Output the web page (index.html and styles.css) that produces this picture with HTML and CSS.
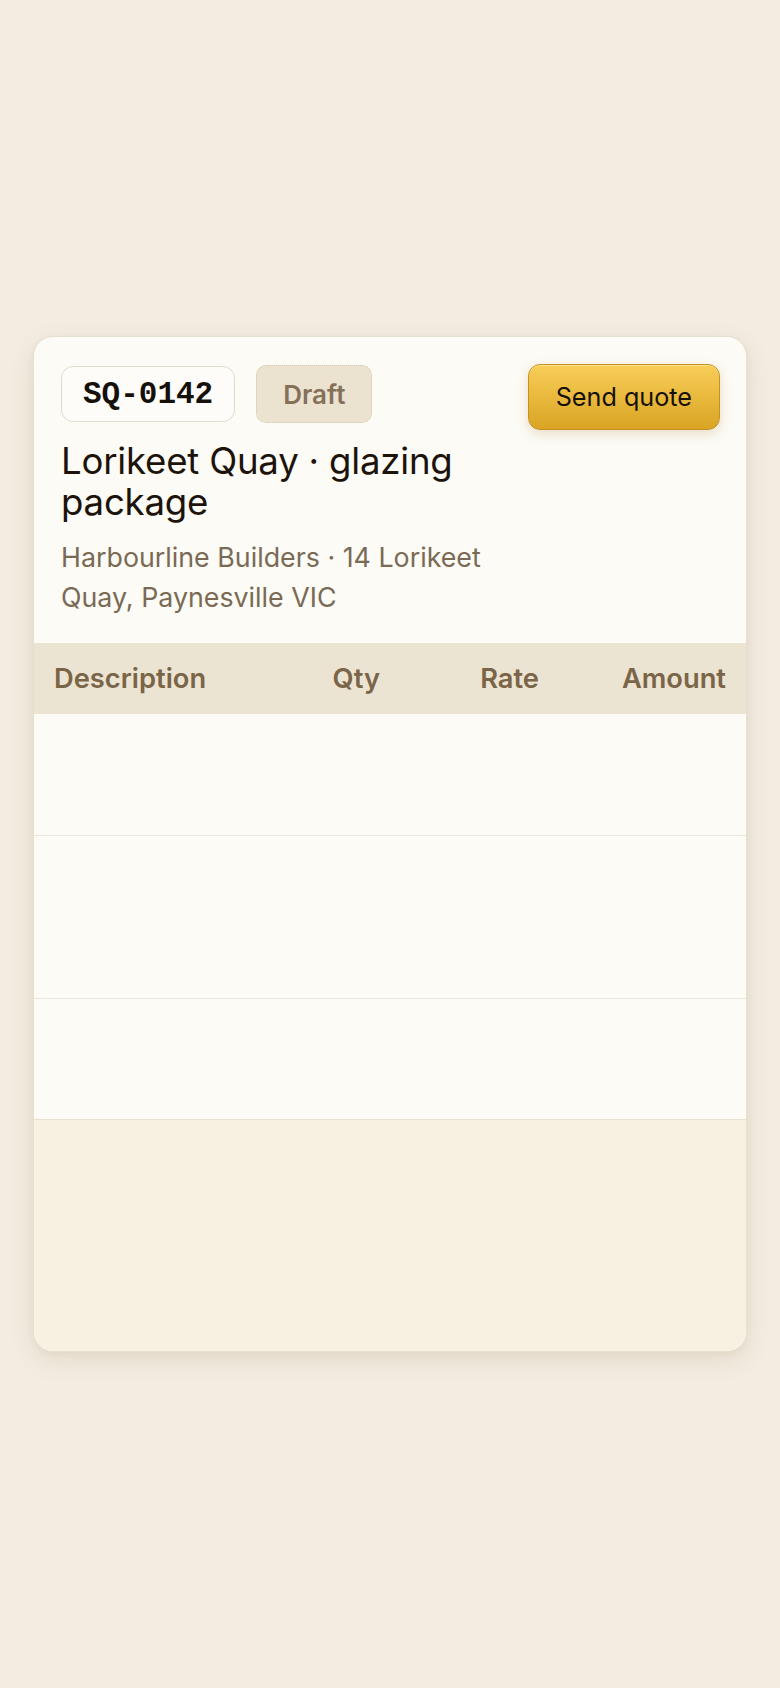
FILE: index.html
```html
<!DOCTYPE html>
<html lang="en">
<head>
  <meta charset="UTF-8" />
  <meta name="viewport" content="width=device-width,initial-scale=1" />
  <title>SQ-0142 · Lorikeet Quay</title>
  <link rel="stylesheet" href="styles.css">
</head>
<body>

  <div class="quote-card">

    <!-- Header -->
    <div class="quote-head">
      <div class="quote-info">
        <div class="quote-tags">
          <span class="quote-ref">SQ-0142</span>
          <span class="quote-status">Draft</span>
        </div>
        <h1 class="quote-title">Lorikeet Quay · glazing package</h1>
        <p class="quote-client">Harbourline Builders · 14 Lorikeet Quay, Paynesville VIC</p>
      </div>
      <button class="send-btn">Send quote</button>
    </div>

    <!-- Line items -->
    <div class="items">
      <div class="items-head">
        <span class="col-desc">Description</span>
        <span class="col-num">Qty</span>
        <span class="col-num">Rate</span>
        <span class="col-num">Amount</span>
      </div>
      <div class="item-row row-a"></div>
      <div class="item-row row-b"></div>
      <div class="item-row row-c"></div>
    </div>

    <!-- Totals -->
    <div class="totals"></div>

  </div>

</body>
</html>
```

FILE: styles.css
```css
/* RESET & GLOBAL */
* { margin:0; padding:0; box-sizing:border-box; }
html, body {
  height:100%; font-family:Inter, 'Noto Sans', sans-serif;
  background:#f3ece1; color:#1c130b;
}
body {
  display:flex; align-items:center; padding:0 33px;
}

/* CARD */
.quote-card {
  width:100%; background:#fcfbf6;
  border:1px solid #e6e0d3; border-radius:20px; overflow:hidden;
  box-shadow:0 8px 24px rgba(120,95,50,0.12), 0 2px 6px rgba(120,95,50,0.06);
}

/* HEADER */
.quote-head {
  display:flex; align-items:flex-start; gap:24px;
  padding:28px 26px 26px 27px;
}
.quote-info { flex:1; min-width:0; }
.quote-tags { display:flex; align-items:center; gap:21px; margin-bottom:18px; }
.quote-ref {
  display:inline-flex; align-items:center; height:56px; padding:0 21px;
  font-family:'Liberation Mono', 'DejaVu Sans Mono', monospace;
  font-size:31px; font-weight:700; color:#15100a;
  background:#fdfcf8; border:1px solid #e2dccd; border-radius:12px;
}
.quote-status {
  display:inline-flex; align-items:center; height:58px; padding:0 26px;
  font-size:26px; font-weight:600; color:#85705a;
  background:#ebe3cf; border:1px dotted #d3c8ae; border-radius:10px;
}
.quote-title {
  font-size:36.6px; font-weight:400; line-height:41px; color:#1c130b;
  letter-spacing:-0.2px;
}
.quote-client {
  margin-top:14px; font-size:26.8px; line-height:40px; color:#7a6a55;
}
.send-btn {
  flex:none; height:66px; padding:0 27px; margin-top:-1px;
  font-family:Inter, sans-serif; font-size:25.2px; color:#16100a;
  background:linear-gradient(#f8ce58, #d9a423);
  border:1px solid #c8911f; border-radius:12px; cursor:pointer;
  box-shadow:inset 0 1px 0 rgba(255,240,190,0.6), 0 4px 12px rgba(170,120,30,0.22);
}

/* ITEMS TABLE */
.items-head, .item-row {
  display:grid; grid-template-columns:1fr 120px 159px 187px;
}
.items-head {
  height:71px; align-items:center; background:#ece4d2;
  font-size:27.3px; font-weight:600; color:#7a6548;
}
.items-head span { padding:0 20px; }
.col-desc { text-align:left; }
.col-num { text-align:right; }
.item-row { border-bottom:1px solid #ebe7dc; }
.row-a { height:122px; }
.row-b { height:163px; }
.row-c { height:121px; border-bottom-color:#e9e1cf; }

/* TOTALS */
.totals { height:231px; background:#f7f1e2; }
```
